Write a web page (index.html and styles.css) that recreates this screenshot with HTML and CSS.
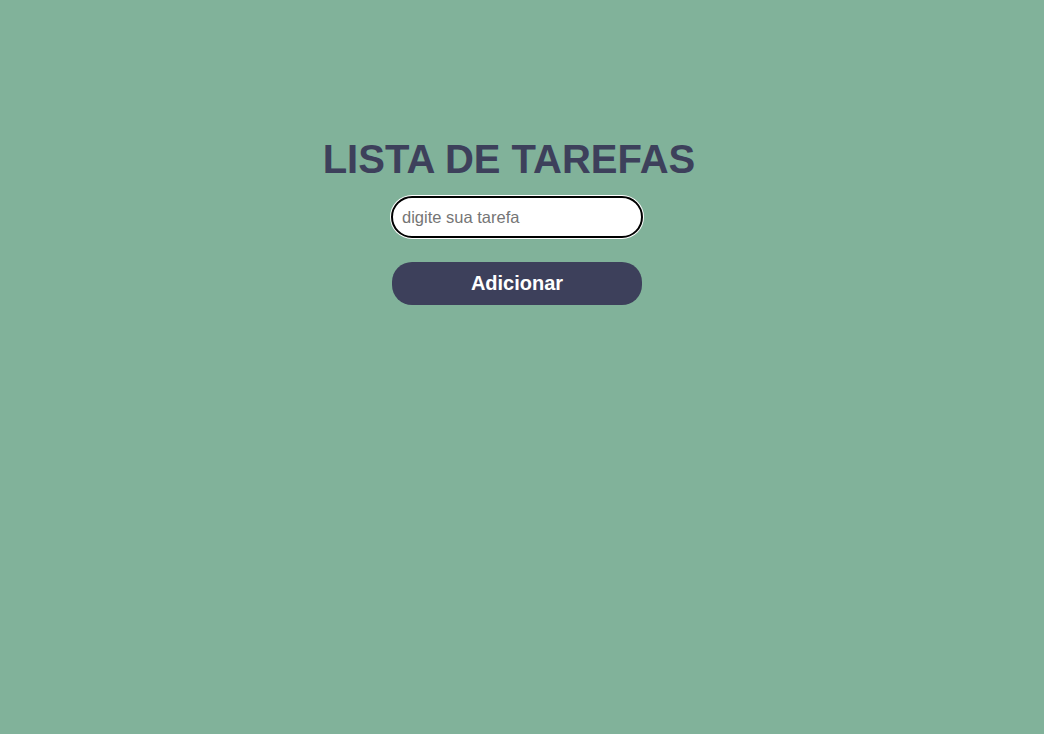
FILE: index.html
```html
<!DOCTYPE html>
<html lang="pt-BR">
<head>
<meta charset="utf-8">
<title>Lista de Tarefas</title>
<link rel="stylesheet" href="styles.css">
</head>
<body>
<main class="app">
  <h1 class="title">LISTA DE TAREFAS</h1>
  <input class="task-input" type="text" placeholder="digite sua tarefa">
  <button class="add-btn" type="button">Adicionar</button>
</main>
</body>
</html>
```
FILE: styles.css
```css
html, body {
  margin: 0;
  padding: 0;
}
body {
  background: #81b29a;
  font-family: "Liberation Sans", Arial, sans-serif;
  min-height: 734px;
}
.app {
  display: flex;
  flex-direction: column;
  align-items: center;
  padding-top: 135px;
  padding-left: 8px;
  padding-right: 18px;
}
.title {
  margin: 0 16px 13px 0;
  color: #3d405b;
  font-size: 40px;
  font-weight: bold;
  line-height: 48px;
}
.task-input {
  box-sizing: border-box;
  width: 252px;
  height: 42px;
  border: 2px solid #000;
  border-radius: 21px;
  box-shadow: 0 0 0 1px #fff;
  background: #fff;
  padding: 0 9px;
  font-family: "Liberation Sans", Arial, sans-serif;
  font-size: 16.5px;
  color: #333;
  outline: none;
}
.task-input::placeholder {
  color: #757575;
}
.add-btn {
  margin-top: 24px;
  width: 250px;
  height: 43px;
  border: none;
  border-radius: 20px;
  background: #3d405b;
  color: #fff;
  font-family: "Liberation Sans", Arial, sans-serif;
  font-size: 20px;
  font-weight: bold;
  cursor: pointer;
}
```
